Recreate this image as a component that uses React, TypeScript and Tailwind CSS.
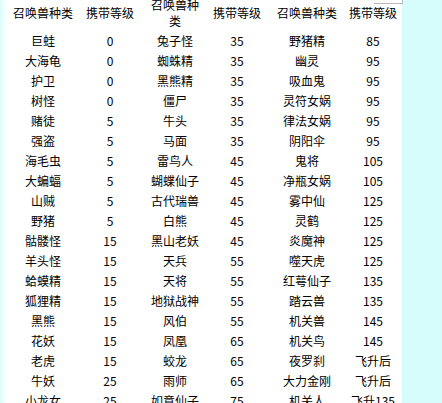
import React from "react";

const rows: [string, string, string, string, string, string][] = [
  ["巨蛙", "0", "兔子怪", "35", "野猪精", "85"],
  ["大海龟", "0", "蜘蛛精", "35", "幽灵", "95"],
  ["护卫", "0", "黑熊精", "35", "吸血鬼", "95"],
  ["树怪", "0", "僵尸", "35", "灵符女娲", "95"],
  ["赌徒", "5", "牛头", "35", "律法女娲", "95"],
  ["强盗", "5", "马面", "35", "阴阳伞", "95"],
  ["海毛虫", "5", "雷鸟人", "45", "鬼将", "105"],
  ["大蝙蝠", "5", "蝴蝶仙子", "45", "净瓶女娲", "105"],
  ["山贼", "5", "古代瑞兽", "45", "雾中仙", "125"],
  ["野猪", "5", "白熊", "45", "灵鹤", "125"],
  ["骷髅怪", "15", "黑山老妖", "45", "炎魔神", "125"],
  ["羊头怪", "15", "天兵", "55", "噬天虎", "125"],
  ["蛤蟆精", "15", "天将", "55", "红萼仙子", "135"],
  ["狐狸精", "15", "地狱战神", "55", "踏云兽", "135"],
  ["黑熊", "15", "风伯", "55", "机关兽", "145"],
  ["花妖", "15", "凤凰", "65", "机关鸟", "145"],
  ["老虎", "15", "蛟龙", "65", "夜罗刹", "飞升后"],
  ["牛妖", "25", "雨师", "65", "大力金刚", "飞升后"],
  ["小龙女", "25", "如意仙子", "75", "机关人", "飞升135"],
];

const cols = "grid grid-cols-[72px_62px_68px_56px_84px_48px]";

export default function App() {
  return (
    <div
      className="relative flex w-[442px] h-[403px] overflow-hidden bg-[#d7fcfc] text-black"
      style={{ fontFamily: '"Noto Sans CJK SC", "Noto Sans", sans-serif' }}
    >
      <div className="w-[7px] h-full bg-gradient-to-r from-[#d7fcfc] to-white" />
      <div className="w-[395px] h-full bg-white">
        <div className="-mt-[6px] text-[12px]">
          <div className={`${cols} h-[37px] items-center text-center leading-[16px]`}>
            <div className="whitespace-nowrap">召唤兽种类</div>
            <div className="whitespace-nowrap">携带等级</div>
            <div>
              召唤兽种
              <br />类
            </div>
            <div className="whitespace-nowrap">携带等级</div>
            <div className="whitespace-nowrap">召唤兽种类</div>
            <div className="whitespace-nowrap">携带等级</div>
          </div>
          {rows.map((r, i) => (
            <div key={i} className={`${cols} h-[20px] items-center text-center leading-[20px]`}>
              {r.map((c, j) => (
                <div key={j} className="whitespace-nowrap">
                  {c}
                </div>
              ))}
            </div>
          ))}
        </div>
      </div>
      <div className="absolute left-[374px] top-0 w-[29px] h-[4px] border-b border-r border-[#b8b8b8]" />
    </div>
  );
}
